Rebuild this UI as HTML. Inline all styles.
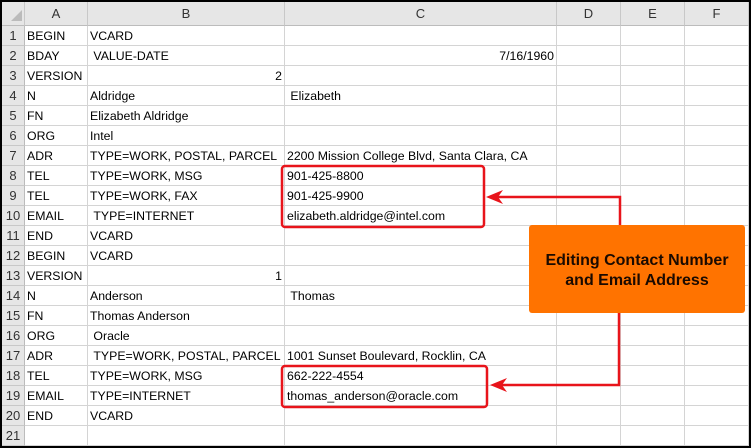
<!DOCTYPE html><html><head><style>
body{margin:0;width:751px;height:448px;overflow:hidden;background:#fff;font-family:"Liberation Sans",sans-serif;font-size:12.3px;color:#000;position:relative}
.frame{position:absolute;left:0;top:0;width:747px;height:444px;border:2px solid #000}
.h{position:absolute;top:2px;height:24px;background:#e6e6e6;border-right:1px solid #c8c8c8;border-bottom:1px solid #bcbcbc;box-sizing:border-box;text-align:center;line-height:24px;color:#333;font-size:13px}
.r{position:absolute;left:2px;width:23px;height:20px;background:#e6e6e6;border-bottom:1px solid #c8c8c8;border-right:1px solid #bcbcbc;box-sizing:border-box;text-align:center;line-height:20px;color:#333;font-size:13px}
.vl{position:absolute;top:26px;height:420px;width:1px;background:#d4d4d4}
.hl{position:absolute;left:25px;width:723px;height:1px;background:#d4d4d4}
.t{position:absolute;line-height:20px;white-space:nowrap}
</style></head><body>
<script>
var b=document.body,h='';
var cols=[[2,25,''],[25,88,'A'],[88,285,'B'],[285,557,'C'],[557,621,'D'],[621,685,'E'],[685,749,'F']];
cols.forEach(function(c){h+='<div class="h" style="left:'+c[0]+'px;width:'+(c[1]-c[0])+'px">'+c[2]+'</div>';if(c[2])h+='<div class="vl" style="left:'+(c[1]-1)+'px"></div>';});
h+='<div style="position:absolute;left:11px;top:10px;width:0;height:0;border-left:11px solid transparent;border-bottom:11px solid #bbb"></div>';
for(var i=1;i<=21;i++){var y=26+20*(i-1);h+='<div class="r" style="top:'+y+'px">'+i+'</div><div class="hl" style="top:'+(y+19)+'px"></div>';}
var d=[
['BEGIN','VCARD',''],['BDAY',' VALUE-DATE','R7/16/1960'],['VERSION','R2',''],['N','Aldridge',' Elizabeth'],['FN','Elizabeth Aldridge',''],['ORG','Intel',''],
['ADR','TYPE=WORK, POSTAL, PARCEL','2200 Mission College Blvd, Santa Clara, CA'],['TEL','TYPE=WORK, MSG','901-425-8800'],['TEL','TYPE=WORK, FAX','901-425-9900'],
['EMAIL',' TYPE=INTERNET','elizabeth.aldridge@intel.com'],['END','VCARD',''],['BEGIN','VCARD',''],['VERSION','R1',''],['N','Anderson',' Thomas'],['FN','Thomas Anderson',''],
['ORG',' Oracle',''],['ADR',' TYPE=WORK, POSTAL, PARCEL','1001 Sunset Boulevard, Rocklin, CA'],['TEL','TYPE=WORK, MSG','662-222-4554'],['EMAIL','TYPE=INTERNET','thomas_anderson@oracle.com'],['END','VCARD','']];
var xs=[[27,88],[90,285],[287,557]];
d.forEach(function(r,i){var y=26+20*i;r.forEach(function(s,j){if(!s)return;if(s[0]=='R')h+='<div class="t" style="top:'+y+'px;right:'+(751-xs[j][1]+3)+'px">'+s.slice(1)+'</div>';else h+='<div class="t" style="top:'+y+'px;left:'+xs[j][0]+'px">'+s.replace(/^ /,'&nbsp;')+'</div>';});});
b.insertAdjacentHTML('beforeend',h);
</script>
<div class="frame"></div>
<svg style="position:absolute;left:0;top:0" width="751" height="448">
<rect x="282" y="166" width="202" height="61" rx="3" fill="none" stroke="#e8141b" stroke-width="2.5"/>
<rect x="282" y="366" width="205" height="41" rx="3" fill="none" stroke="#e8141b" stroke-width="2.5"/>
<polyline points="620,226 620,197 498,197" fill="none" stroke="#e8141b" stroke-width="2.5"/>
<polygon points="486,197 503,190 498,197 503,204" fill="#e8141b"/>
<polyline points="619,312 619,385 502,385" fill="none" stroke="#e8141b" stroke-width="2.5"/>
<polygon points="490,385 507,378 502,385 507,392" fill="#e8141b"/>
<rect x="529" y="225" width="216" height="88" rx="3" fill="#ff7300"/>
<text x="637" y="265" text-anchor="middle" font-family="Liberation Sans" font-weight="bold" font-size="16" fill="#1a0a00">Editing Contact Number</text>
<text x="637" y="285" text-anchor="middle" font-family="Liberation Sans" font-weight="bold" font-size="16" fill="#1a0a00">and Email Address</text>
</svg>
</body></html>
